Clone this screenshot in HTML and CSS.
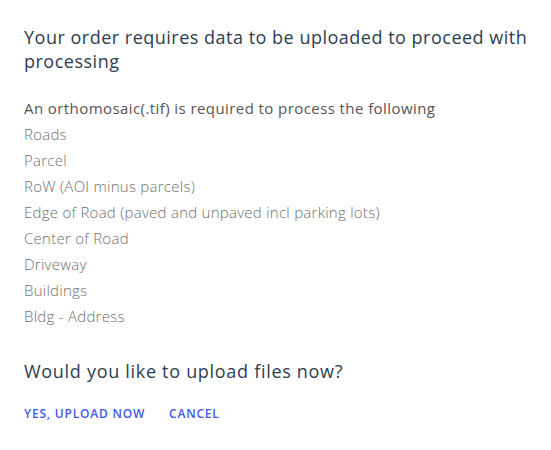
FILE: index.html
```html
<!DOCTYPE html>
<html>
<head>
<meta charset="utf-8">
<link rel="stylesheet" href="styles.css">
</head>
<body>
<div class="dialog">
  <h2 class="title">Your order requires data to be uploaded to proceed with processing</h2>
  <div class="content">
    <p class="lead">An orthomosaic(.tif) is required to process the following</p>
    <ul class="list">
      <li>Roads</li>
      <li>Parcel</li>
      <li>RoW (AOI minus parcels)</li>
      <li>Edge of Road (paved and unpaved incl parking lots)</li>
      <li>Center of Road</li>
      <li>Driveway</li>
      <li>Buildings</li>
      <li>Bldg - Address</li>
    </ul>
  </div>
  <p class="question">Would you like to upload files now?</p>
  <div class="actions">
    <button class="btn">YES, UPLOAD NOW</button>
    <button class="btn">CANCEL</button>
  </div>
</div>
</body>
</html>
```
FILE: styles.css
```css
html, body {
  margin: 0;
  padding: 0;
  background: #ffffff;
}
body {
  font-family: "Open Sans", "Liberation Sans", sans-serif;
}
.dialog {
  padding: 25px 12px 0 24px;
  display: flex;
  flex-direction: column;
}
.title {
  margin: 0;
  font-size: 18px;
  font-weight: 400;
  line-height: 24px;
  letter-spacing: 0.5px;
  color: #2c3e50;
}
.content {
  margin-top: 22px;
}
.lead {
  margin: 0;
  font-size: 15px;
  line-height: 26px;
  color: #555555;
  letter-spacing: 0.42px;
}
.list {
  list-style: none;
  margin: 0;
  padding: 0;
}
.list li {
  font-size: 15px;
  line-height: 26px;
  font-weight: 300;
  color: #6f6f6f;
  letter-spacing: 0.26px;
}
.question {
  margin: 30px 0 0 0;
  font-size: 18px;
  line-height: 24px;
  letter-spacing: 0.7px;
  color: #2c3e50;
}
.actions {
  margin-top: 23px;
  display: flex;
  gap: 24px;
}
.btn {
  border: 0;
  background: none;
  padding: 0;
  font-family: inherit;
  font-size: 12px;
  font-weight: 600;
  letter-spacing: 0.8px;
  color: #3d5af1;
  line-height: 16px;
  cursor: pointer;
}
```
